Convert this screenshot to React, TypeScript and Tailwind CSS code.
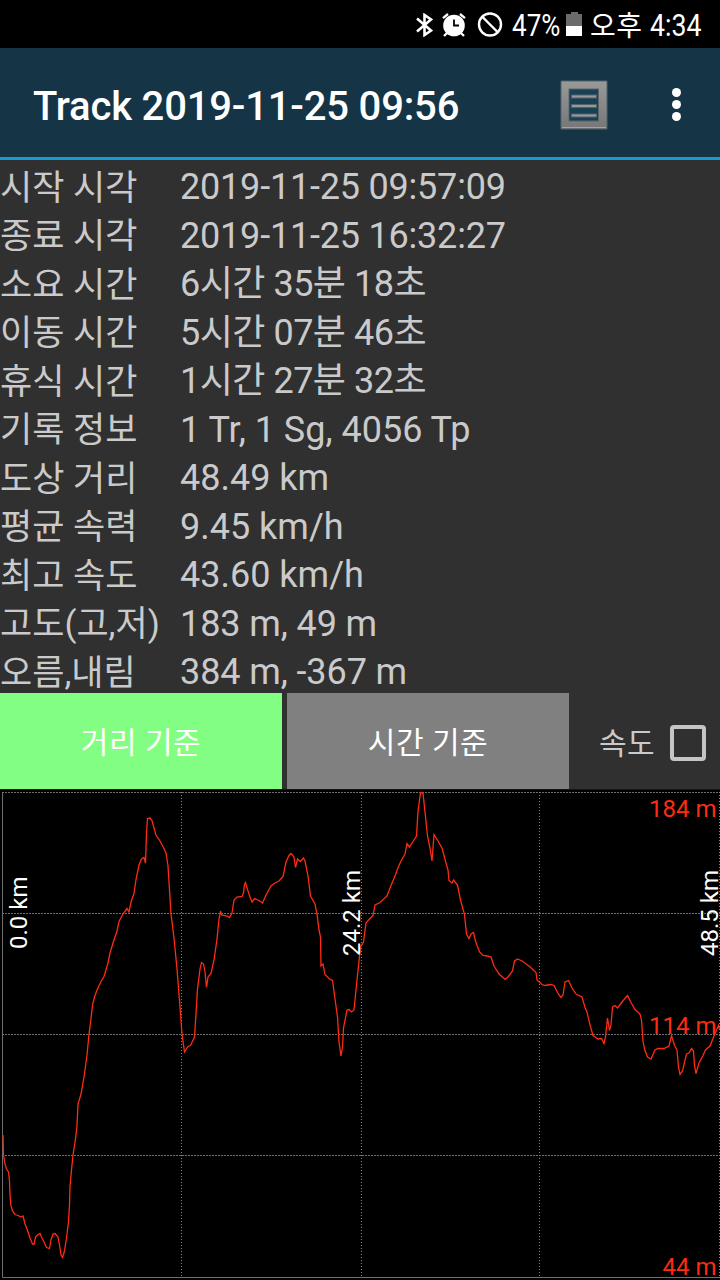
type StatRow = {
  label: string;
  value: string;
  tracking?: string;
};

const stats: StatRow[] = [
  { label: "시작 시각", value: "2019-11-25 09:57:09", tracking: "tracking-[-0.2px]" },
  { label: "종료 시각", value: "2019-11-25 16:32:27", tracking: "tracking-[-0.2px]" },
  { label: "소요 시간", value: "6시간 35분 18초", tracking: "tracking-[-0.5px]" },
  { label: "이동 시간", value: "5시간 07분 46초", tracking: "tracking-[-0.5px]" },
  { label: "휴식 시간", value: "1시간 27분 32초", tracking: "tracking-[-0.5px]" },
  { label: "기록 정보", value: "1 Tr, 1 Sg, 4056 Tp" },
  { label: "도상 거리", value: "48.49 km" },
  { label: "평균 속력", value: "9.45 km/h" },
  { label: "최고 속도", value: "43.60 km/h" },
  { label: "고도(고,저)", value: "183 m, 49 m", tracking: "tracking-[-0.1px]" },
  { label: "오름,내림", value: "384 m, -367 m", tracking: "tracking-[-0.1px]" }
];

const elevation = [
  "3,1135 3.5,1155 5,1164 6.5,1169 8.5,1172 9.5,1181 10,1195 11,1206 12.5,1211 15,1214.5 18,1215.5 21,1217 23,1216",
  "25,1224 27,1229 30,1238 32.5,1244 34,1244.5 35.5,1237 37.5,1235 40,1233.5 42,1238 44.5,1243 46.5,1247.5 49.5,1248.5 51,1240 53,1234",
  "55,1233.5 58,1237 60,1248 61,1255 62.5,1257.5 64.5,1251 66.5,1238 68.5,1222 69.5,1205 70,1186 71.5,1170 73,1155 75.5,1139 77,1126 78,1104",
  "81,1094 84,1077 87,1055 89,1034 91,1019 92.5,1005 94.5,997 97,990 101,981.5 104,976.5 108,963 110,953 113,943 117,931 119,921.5",
  "123,914 127,908.5 129,912 131,902 134,893.5 136,879.5 139,865 141.5,859 144,857.5 145.5,863 146.5,833 147.5,818.5 150,818 152,820.5 154,828 156,835",
  "160,841 163,846.5 166,853 168,866 169.5,890 171,914 174,938 177,969 180,1007 182,1034 184.5,1052 188,1046.5 190.5,1045.5 194.5,1037 196,1014",
  "197.5,989 200,969 201.5,962.5 203.5,964 205,972 206.5,987.5 208,977 211,973.5 214,960 217,939 219,919 220.5,911 221.5,915 227,916 229.5,917.5 232,913",
  "234,900 237,897 242,896.5 243.5,893 244.5,884.5 245.5,882.5 248,891 250.5,898.5 252,902 254.5,898.5 259,900.5 262.5,903 266,895 271,886 275,883 279,881 283,876.5",
  "286,862 289,855.5 291,853.5 294,857 295.5,867.5 297.5,859 300.5,861.5 303.5,858 305,861 308,876 310.5,896 315,904 317,914 319,930 320.5,937 321,966",
  "323,964 325,974.5 329,978.5 332.5,980.5 335,999 337.5,1017 339,1042 341,1056 342.5,1047 343.5,1028 347,1010 349,1009.5 351.5,1012 354,1010 357,980 360.5,947 363.5,942",
  "366,923 369,919.5 373,915.5 375,905 380,902.5 387,896 391,885.5 395,876 397.5,869 401,861 405,854 407,843.5 409.5,847 413,841.5 416.5,836 418,811",
  "420.5,793 423,793 425,812 427.5,836 430,848 432,861 434,834.5 438,841 442,848 446,863 448,870 449,880.5 452,883 453.5,880 457.5,885 460.5,900 464.5,914.5 466.5,934",
  "469,938.5 471,934 473.5,932.5 475.5,941 479.5,952 483,955.5 487.5,956 491,957 494,966 499,974 505,979.5 508,977 512.5,971 514.5,961 517.5,959 522,961 529,966",
  "536,972.5 537,980 542,984.5 545,985.5 551,984.5 554,985.5 558,993.5 561,997.5 563,995 565,982 568.5,980.5 572,988 576,994 582,997 585,1007.5 587,1012 590,1025 593,1035.5",
  "598,1039 601.5,1038.5 604,1043.5 605.5,1037 607.5,1018 609.5,1030.5 611,1025 612.5,1007 615,1005.5 617.5,1008 622,1002 627.5,995.5 631,1002.5 635,1009.5 640,1014 641.5,1020",
  "643,1041 644.5,1049 647.5,1057 651,1059 655,1050 658,1048.5 664,1048.5 669,1046 671.5,1035.5 674.5,1045.5 677,1050 678.5,1067 680,1074.5 682.5,1071 686.5,1054 689,1053 691.5,1048.5",
  "693.5,1051 694.5,1066 696,1073.5 699,1063 703,1055.5 705.5,1050 710,1046 714,1036 717,1029 718.5,1025.5 719.5,1029"
].join(" ");

function StatusBar() {
  return (
    <div className="flex h-12 items-center bg-black pt-px pl-[415px] text-[30px] leading-[47px] text-white">
      <svg className="mr-[9px] h-6 w-[18px] shrink-0" viewBox="0 0 18 24" fill="none" stroke="white" strokeWidth="2.6">
        <path d="M2 5.5 16 17.5 9.5 22V2l6.5 4.5L2 18.5" />
      </svg>
      <svg className="mr-[11px] h-6 w-6 shrink-0" viewBox="0 0 24 24">
        <circle cx="12" cy="12.5" r="10.8" fill="white" />
        <path d="M1 5.2 6 1M18 1l5 4.2M5 20l-3 3M19 20l3 3" stroke="white" strokeWidth="2.3" />
        <path d="M12 6.5v6h5" fill="none" stroke="black" strokeWidth="1.8" />
      </svg>
      <svg className="mr-[9px] h-[26px] w-[26px] shrink-0" viewBox="0 0 26 26" fill="none" stroke="white" strokeWidth="2.4">
        <circle cx="13" cy="12.5" r="11" />
        <path d="m5.5 5 15 15" />
      </svg>
      <span className="inline-block w-[54px] origin-left scale-x-[0.84] pt-0.5 text-[31px]">47%</span>
      <svg className="mb-0.5 h-6 w-4 shrink-0" viewBox="0 0 16 24">
        <path d="M5 0h7v2h4v12H0V2h5z" fill="#6b6b6b" />
        <path d="M0 14h16v10H0z" fill="white" />
      </svg>
      <span className="ml-2 w-[60px] shrink-0 pt-[3px] text-[28px] tracking-[0.5px] whitespace-nowrap">오후</span>
      <span className="inline-block origin-left scale-x-[0.86] pt-0.5 text-[31px]">4:34</span>
    </div>
  );
}

function TitleBar() {
  return (
    <header className="flex h-28 items-center border-b-[3px] border-[#159dd2] bg-[#153446] pt-1 pl-[33px]">
      <h1 className="w-[527px] pt-1 text-[40px] font-medium tracking-[-0.18px] whitespace-nowrap text-white">
        Track 2019-11-25 09:56
      </h1>
      <svg className="h-[50px] w-12" viewBox="0 0 48 50">
        <defs>
          <linearGradient id="metal" x2="0" y2="1">
            <stop stopColor="#999" />
            <stop offset="1" stopColor="#777" />
          </linearGradient>
        </defs>
        <rect x=".5" y=".5" width="47" height="49" rx="1" fill="#52656f" />
        <rect x="1.5" y="1.5" width="45" height="47" fill="url(#metal)" />
        <path d="M2 47.5h44" stroke="#a3a3a3" />
        <rect x="8.5" y="8.5" width="30.5" height="33" fill="#5d6468" />
        <rect x="9.5" y="9.5" width="28.5" height="31" fill="#194154" />
        <path d="M11 16.5h26M11 26h26M11 35.5h26" stroke="#53636c" strokeWidth="4" />
        <path d="M12 16.5h24M12 26h24M12 35.5h24" stroke="#999" strokeWidth="2.2" />
      </svg>
      <div className="ml-[63.5px] flex flex-col gap-[3px]">
        <i className="size-[9px] rounded-full bg-white" />
        <i className="size-[9px] rounded-full bg-white" />
        <i className="size-[9px] rounded-full bg-white" />
      </div>
    </header>
  );
}

function ElevationChart() {
  return (
    <svg className="block h-[490px] w-[720px] bg-black" viewBox="0 790 720 490" fontSize="24">
      <g stroke="#6e6e6e" fill="none">
        <path d="M2 792.5h718M2 913.5h718M2 1034.5h718M2 1155.5h718" strokeDasharray="2 1" />
        <path d="M181.5 792v486M361.5 792v486M539.5 792v486M719.5 792v486" stroke="#858585" strokeDasharray="1 2" />
        <path d="M2.5 792v485.5H720" />
      </g>
      <polyline points={elevation} fill="none" stroke="#ff2b12" strokeWidth="1.3" />
      <g fill="white">
        <text transform="translate(26.5 949) rotate(-90)">0.0 km</text>
        <text transform="translate(360 956) rotate(-90)">24.2 km</text>
        <text transform="translate(718 956) rotate(-90)">48.5 km</text>
      </g>
      <g fill="#ff2b12" textAnchor="end">
        <text x="716.5" y="817">184 m</text>
        <text x="716.5" y="1033.5">114 m</text>
        <text x="716.5" y="1274.5">44 m</text>
      </g>
    </svg>
  );
}

export default function App() {
  return (
    <div className="h-[1280px] w-[720px] overflow-hidden bg-[#303030] font-['Roboto','Noto_Sans_CJK_KR',sans-serif]">
      <StatusBar />
      <TitleBar />
      <section className="h-[533px] pt-[2.5px] text-4xl text-[#cacaca]">
        {stats.map(({ label, value, tracking }) => (
          <div key={label} className="flex h-[48.5px] items-center whitespace-nowrap">
            <span className="w-[180px] pt-[3px] text-[35px] leading-[45px]">{label}</span>
            <span className={`pt-[2px] leading-[47px] ${tracking ?? ""}`}>{value}</span>
          </div>
        ))}
      </section>
      <div className="flex h-[97px] items-stretch border-b border-[#151515] text-[30px] text-white">
        <button className="mr-[5px] w-[282px] bg-[#82ff82] pt-[3px] tracking-[0.5px]">거리 기준</button>
        <button className="w-[282px] bg-[#808080] pt-[3px] tracking-[0.5px]">시간 기준</button>
        <label className="flex items-center pt-[3px] pl-[30px] text-[#cacaca]">
          <span className="w-[71px] pt-px tracking-[0.5px]">속도</span>
          <span className="size-9 rounded-[4px] border-4 border-[#c5c5c5]" />
        </label>
      </div>
      <ElevationChart />
    </div>
  );
}
